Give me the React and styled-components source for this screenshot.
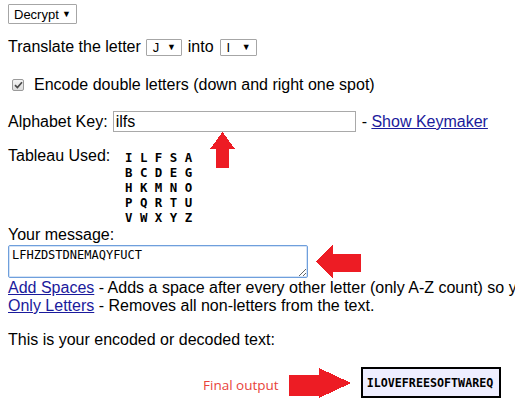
import React from 'react'
import styled, { createGlobalStyle } from 'styled-components'

const GlobalStyle = createGlobalStyle`
    html, body {
        margin: 0;
        padding: 0;
        background: #ffffff;
        overflow: hidden;
    }
    body {
        font-family: "Liberation Sans", Arial, sans-serif;
        font-size: 16px;
        color: #000000;
    }
`

const Page = styled.div`
    padding: 4px 8px 0 8px;
    width: 700px;
`
const Line = styled.div`
    display: flex;
    align-items: center;
    height: ${p => p.h || 18}px;
    margin-top: ${p => p.mt || 0}px;
    white-space: nowrap;
    position: relative;
`
const FakeSelect = styled.span`
    display: inline-flex;
    align-items: center;
    justify-content: space-between;
    box-sizing: border-box;
    width: ${p => p.w}px;
    height: ${p => p.h}px;
    padding: 0 5px 0 ${p => p.pl || 5}px;
    margin: 0 ${p => p.mr || 0}px 0 ${p => p.ml || 0}px;
    border: 1px solid #a6a6a6;
    border-radius: 1px;
    background: #ffffff;
    font-family: "Liberation Sans", Arial, sans-serif;
    font-size: 13px;
    color: #000;
`
const Caret = styled.span`
    font-size: 9px;
    line-height: 1;
    margin-top: 1px;
`
const CheckBox = styled.span`
    display: inline-flex;
    align-items: center;
    justify-content: center;
    box-sizing: border-box;
    width: 12px;
    height: 12px;
    margin: 0 10px 0 4px;
    border: 1px solid #9a9a9a;
    border-radius: 2px;
    background: linear-gradient(#f4f4f4, #dcdcdc);
`
const KeyInput = styled.input`
    box-sizing: border-box;
    width: 243px;
    height: 21px;
    margin: 0 6px 0 5px;
    padding: 0 2px;
    border: 1px solid #a9a9a9;
    font-family: "Liberation Sans", Arial, sans-serif;
    font-size: 16px;
    color: #000;
    outline: none;
`
const Link = styled.a`
    color: #1a1a9c;
    text-decoration: underline;
    cursor: pointer;
`
const Overlay = styled.svg`
    position: absolute;
    left: ${p => p.x}px;
    top: ${p => p.y}px;
    shape-rendering: crispEdges;
`
const TableauRow = styled.div`
    display: flex;
    align-items: flex-start;
    margin-top: 15px;
`
const TableauLabel = styled.span`
    line-height: 18px;
    width: 117px;
`
const Tableau = styled.pre`
    margin: 0;
    padding-top: 3px;
    font-family: "DejaVu Sans Mono", monospace;
    font-weight: bold;
    font-size: 12.4px;
    line-height: 15px;
`
const MessageBox = styled.div`
    position: relative;
    margin-top: 1px;
`
const Message = styled.textarea`
    display: block;
    box-sizing: border-box;
    width: 300px;
    height: 33px;
    margin: 0;
    padding: 2px 3px;
    border: 1px solid #6f9fdc;
    border-radius: 2px;
    box-shadow: inset 0 0 0 1px #d4e3f6;
    font-family: "DejaVu Sans Mono", monospace;
    font-size: 12px;
    color: #000;
    outline: none;
`
const FinalRow = styled.div`
    display: flex;
    align-items: center;
    margin-top: 18px;
    padding-left: 195px;
`
const FinalLabel = styled.span`
    font-family: "Open Sans", sans-serif;
    font-size: 13.5px;
    color: #e8433b;
    margin-top: 4px;
`
const Arrow = styled.svg`
    display: block;
    margin-left: ${p => p.ml || 0}px;
    shape-rendering: crispEdges;
`
const Output = styled.div`
    box-sizing: border-box;
    width: 140px;
    height: 31px;
    margin-left: 10px;
    border: 2px solid #000;
    background: #eeeeff;
    display: flex;
    align-items: center;
    padding-left: 4px;
    font-family: "DejaVu Sans Mono", monospace;
    font-weight: bold;
    font-size: 11.7px;
`

const RED = '#ed1c24'
const tableau = 'I L F S A\nB C D E G\nH K M N O\nP Q R T U\nV W X Y Z'

export default function App() {
    return (
        <Page>
            <GlobalStyle />
            <Line h={20}>
                <FakeSelect w={69} h={20} pl={5}>Decrypt<Caret>▼</Caret></FakeSelect>
            </Line>
            <Line h={20} mt={13}>
                Translate the letter
                <FakeSelect w={36} h={17} ml={5} mr={6} pl={6}>J<Caret>▼</Caret></FakeSelect>
                into
                <FakeSelect w={37} h={17} ml={6} pl={6}>I<Caret>▼</Caret></FakeSelect>
            </Line>
            <Line h={20} mt={18}>
                <CheckBox>
                    <svg width="9" height="8" viewBox="0 0 9 8">
                        <path d="M1 4.2 L3.4 6.6 L8 1.2" fill="none" stroke="#4a4a4a" strokeWidth="1.7" />
                    </svg>
                </CheckBox>
                Encode double letters (down and right one spot)
            </Line>
            <Line h={21} mt={16}>
                Alphabet Key:
                <KeyInput defaultValue="ilfs" />
                -&nbsp;<Link>Show Keymaker</Link>
                <Overlay x={202} y={21} width="26" height="36" viewBox="0 0 26 36">
                    <polygon points="12.5,0 25,17 19,17 19,36 6,36 6,17 0,17" fill={RED} />
                </Overlay>
            </Line>
            <TableauRow>
                <TableauLabel>Tableau Used:</TableauLabel>
                <Tableau>{tableau}</Tableau>
            </TableauRow>
            <Line mt={1}>Your message:</Line>
            <MessageBox>
                <Message defaultValue="LFHZDSTDNEMAQYFUCT" spellCheck={false} />
                <Overlay x={308} y={-1} width="45" height="35" viewBox="0 0 45 35">
                    <polygon points="0,17.5 17,0 17,10 45,10 45,28 17,28 17,35" fill={RED} />
                </Overlay>
            </MessageBox>
            <Line mt={1}>
                <Link>Add Spaces</Link>&nbsp;- Adds a space after every other letter (only A-Z count) so you can read it easier.
            </Line>
            <Line>
                <Link>Only Letters</Link>&nbsp;- Removes all non-letters from the text.
            </Line>
            <Line mt={16}>This is your encoded or decoded text:</Line>
            <FinalRow>
                <FinalLabel>Final output</FinalLabel>
                <Arrow ml={10} width="62" height="30" viewBox="0 0 62 30">
                    <polygon points="0,7 30,7 30,0 62,15 30,30 30,28 0,28" fill={RED} />
                </Arrow>
                <Output>ILOVEFREESOFTWAREQ</Output>
            </FinalRow>
        </Page>
    )
}
